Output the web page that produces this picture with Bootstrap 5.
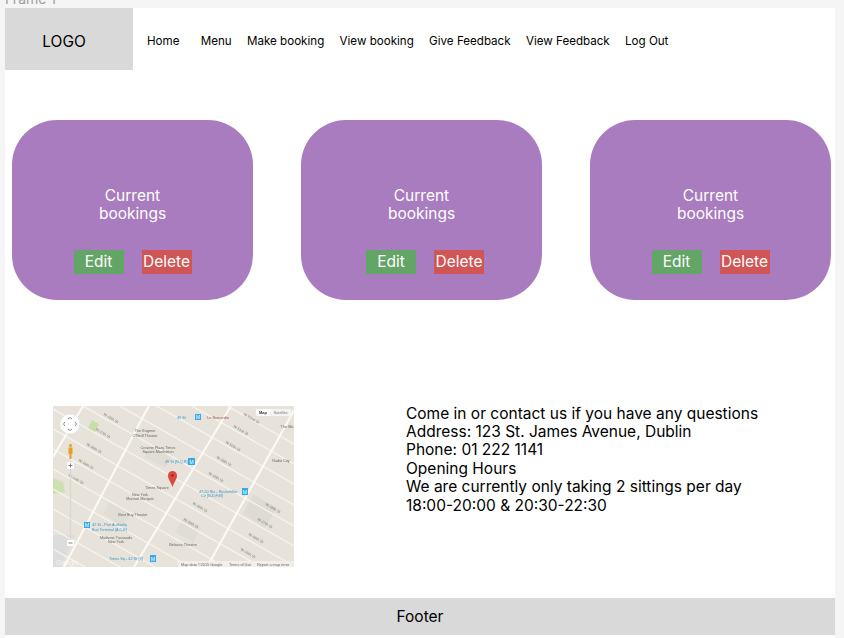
<!DOCTYPE html>
<html lang="en">
<head>
  <meta charset="UTF-8" />
  <title>Restaurant bookings</title>
  <meta name="viewport" content="width=device-width, initial-scale=1" />
  <link href="https://cdn.jsdelivr.net/npm/bootstrap@5.3.0/dist/css/bootstrap.min.css" rel="stylesheet" />
  <style>
    body {
      background-color: #f5f5f5;
      color: #000;
      font-family: Inter, "Liberation Sans", sans-serif;
      font-size: 15.5px;
      height: 638px;
      overflow: hidden;
    }
    .frame-label {
      height: 9px;
      margin-top: -1px;
      padding-left: 5px;
      overflow: hidden;
      font-size: 14px;
      line-height: 0;
      color: #a0a0a0;
    }
    .frame {
      width: 830px;
      height: 630px;
      margin-left: 5px;
      background-color: #fff;
    }
    .logo-box {
      width: 128px;
      height: 62px;
      padding: 5px 10px 0 0;
      background-color: #d9d9d9;
    }
    .top-links {
      padding-left: 14px;
      padding-top: 5px;
      gap: 15.3px;
      font-size: 11.6px;
    }
    .top-links a {
      color: #000;
      text-decoration: none;
    }
    .top-links a:first-child {
      margin-right: 6px;
    }
    .bookings {
      padding: 49.5px 0 0 7px;
      gap: 48px;
    }
    .booking-card {
      width: 241px;
      height: 180px;
      padding-top: 67px;
      border-radius: 45px;
      background-color: #a87cbe;
      color: #fff;
      line-height: 18.4px;
      text-align: center;
    }
    .booking-actions {
      margin-top: 27px;
      gap: 18px;
    }
    .booking-actions.shift-right {
      padding-left: 7px;
    }
    .act-btn {
      width: 50px;
      height: 24px;
      padding: 0;
      border: 0;
      border-radius: 0;
      color: #fff;
      font-size: 15.5px;
      line-height: 24px;
    }
    .act-edit { background-color: #63a566; }
    .act-delete { background-color: #d05555; }
    .info-row {
      padding: 106px 0 0 48px;
    }
    .map-box {
      display: block;
      width: 241px;
      height: 161px;
      filter: blur(0.4px);
    }
    .map-box text {
      font-family: "Liberation Sans", sans-serif;
    }
    .contact-text {
      margin-left: 112px;
      margin-top: -1px;
      line-height: 18.4px;
    }
    .page-foot {
      height: 37px;
      margin-top: 31px;
      background-color: #d9d9d9;
      line-height: 37px;
      text-align: center;
    }
  </style>
</head>
<body>
  <div class="frame-label">Frame 1</div>
  <div class="frame">
    <header class="d-flex">
      <div class="logo-box d-flex align-items-center justify-content-center">LOGO</div>
      <nav class="top-links d-flex align-items-center">
        <a href="#">Home</a>
        <a href="#">Menu</a>
        <a href="#">Make booking</a>
        <a href="#">View booking</a>
        <a href="#">Give Feedback</a>
        <a href="#">View Feedback</a>
        <a href="#">Log Out</a>
      </nav>
    </header>

    <section class="bookings d-flex">
      <div class="booking-card">
        Current<br />bookings
        <div class="booking-actions d-flex justify-content-center">
          <button class="btn act-btn act-edit">Edit</button>
          <button class="btn act-btn act-delete">Delete</button>
        </div>
      </div>
      <div class="booking-card">
        Current<br />bookings
        <div class="booking-actions shift-right d-flex justify-content-center">
          <button class="btn act-btn act-edit">Edit</button>
          <button class="btn act-btn act-delete">Delete</button>
        </div>
      </div>
      <div class="booking-card">
        Current<br />bookings
        <div class="booking-actions d-flex justify-content-center">
          <button class="btn act-btn act-edit">Edit</button>
          <button class="btn act-btn act-delete">Delete</button>
        </div>
      </div>
    </section>

    <section class="info-row d-flex">
      <svg class="map-box" viewBox="0 0 241 161" xmlns="http://www.w3.org/2000/svg">
        <rect width="241" height="161" fill="#e7e3da" />
        <!-- parks and blocks -->
        <path d="M0 72 L10 76 L12 86 L0 88 Z" fill="#cfe0b0" />
        <path d="M39 14 L46 18 L41 27 L35 22 Z" fill="#c5dfa6" />
        <path d="M0 129 L22 129 L8 161 L0 161 Z" fill="#dcdcdc" />
        <path d="M200 88 L224 102 L212 122 L190 108 Z" fill="#dedbd2" />
        <path d="M100 38 L120 49 L112 62 L92 51 Z" fill="#e0ddd5" />
        <path d="M56 96 L78 108 L70 120 L50 108 Z" fill="#e0ddd5" />
        <path d="M130 112 L148 122 L140 136 L122 126 Z" fill="#e0ddd5" />
        <g stroke="#f7f5f0" stroke-width="1.2" fill="none">
          <path d="M0 -99 L241 38" />
          <path d="M0 -79 L241 58" />
          <path d="M0 -59 L241 78" />
          <path d="M0 -38 L241 99" />
          <path d="M0 -17 L241 120" />
          <path d="M0 3 L241 140" />
          <path d="M0 23 L241 160" />
          <path d="M0 43 L208 161" />
          <path d="M0 63 L172 161" />
          <path d="M0 83 L137 161" />
          <path d="M0 103 L102 161" />
          <path d="M0 123 L67 161" />
          <path d="M0 143 L32 161" />
        </g>
        <g stroke="#fbfaf7" stroke-width="2.1" fill="none">
          <path d="M0 51 L30 0" />
          <path d="M11 161 L92 7 L96 0" />
          <path d="M81 161 L178 0" />
          <path d="M154 161 L234 17 L241 4" />
        </g>
        <g fill="#7d7d72" font-size="3.8">
          <text x="50" y="9" transform="rotate(30 50 9)">W 48th St</text>
          <text x="42" y="24" transform="rotate(30 42 24)">W 47th St</text>
          <text x="33" y="39" transform="rotate(30 33 39)">W 46th St</text>
          <text x="25" y="55" transform="rotate(30 25 55)">W 45th St</text>
          <text x="15" y="70" transform="rotate(30 15 70)">W 44th St</text>
          <text x="190" y="9" transform="rotate(30 190 9)">W 52nd St</text>
          <text x="180" y="21" transform="rotate(30 180 21)">W 51st St</text>
          <text x="172" y="37" transform="rotate(30 172 37)">W 50th St</text>
          <text x="163" y="52" transform="rotate(30 163 52)">W 49th St</text>
          <text x="155" y="68" transform="rotate(30 155 68)">W 48th St</text>
          <text x="212" y="99" transform="rotate(30 212 99)">W 48th St</text>
          <text x="204" y="114" transform="rotate(30 204 114)">W 47th St</text>
          <text x="195" y="129" transform="rotate(30 195 129)">W 46th St</text>
          <text x="187" y="144" transform="rotate(30 187 144)">W 45th St</text>
          <text x="139" y="98" transform="rotate(30 139 98)">W 46th St</text>
          <text x="130" y="114" transform="rotate(30 130 114)">W 45th St</text>
        </g>
        <g fill="#666" font-size="3.8" text-anchor="middle">
          <text x="92" y="26">The Eugene</text>
          <text x="92" y="30.5">O'Neill Theater</text>
          <text x="105" y="43">Crowne Plaza Times</text>
          <text x="105" y="47">Square Manhattan</text>
          <text x="104" y="83">Times Square</text>
          <text x="87" y="90">New York</text>
          <text x="87" y="94">Marriott Marquis</text>
          <text x="80" y="110">Best Buy Theater</text>
          <text x="63" y="133">Madame Tussauds</text>
          <text x="63" y="137">New York</text>
          <text x="130" y="140">Belasco Theatre</text>
          <text x="234" y="22">The Mo</text>
          <text x="228" y="56">Radio City</text>
          <text x="165" y="13" fill="#a0524a">Le Bernardin</text>
        </g>
        <g fill="#3a93c9" font-size="3.8">
          <text x="124" y="13">49 St</text>
          <text x="112" y="57">49 St [N,Q,R]</text>
          <text x="146" y="87">47-50 Sts - Rockefeller</text>
          <text x="148" y="91">Ctr [B,D,F,M]</text>
          <text x="39" y="120">42 St - Port Authority</text>
          <text x="39" y="124.5">Bus Terminal [A,C,E]</text>
          <text x="56" y="154">Times Sq - 42 St [S]</text>
        </g>
        <g fill="#33aaf0">
          <rect x="142" y="8" width="6" height="6" />
          <rect x="135" y="52" width="7" height="7" />
          <rect x="189" y="82" width="6" height="7" />
          <rect x="31" y="116" width="6" height="6" />
          <rect x="97" y="149" width="6" height="7" />
        </g>
        <g fill="#fff" font-size="5" text-anchor="middle">
          <text x="145" y="13">M</text>
          <text x="138.500" y="57.500">M</text>
          <text x="192" y="87.500">M</text>
          <text x="34" y="121">M</text>
          <text x="100" y="154.500">M</text>
        </g>
        <!-- map / satellite switch -->
        <rect x="203" y="3" width="14" height="7" fill="#fff" />
        <rect x="217" y="3" width="21" height="7" fill="#f4f4f4" />
        <text x="210" y="8" font-size="4" font-weight="bold" fill="#333" text-anchor="middle">Map</text>
        <text x="227.500" y="8" font-size="4" fill="#777" text-anchor="middle">Satellite</text>
        <!-- pan control -->
        <circle cx="17" cy="18" r="10" fill="#fff" stroke="#ddd" stroke-width=".5" />
        <path d="M15 13 L17 11.500 L19 13 M15 23 L17 24.500 L19 23 M12 16 L10.500 18 L12 20 M22 16 L23.500 18 L22 20" stroke="#666" stroke-width=".8" fill="none" />
        <!-- pegman -->
        <circle cx="17.500" cy="39.500" r="1.500" fill="#e8a020" />
        <path d="M15.500 41.500 H19.500 V48 H18.500 V53 H16.500 V48 H15.500 Z" fill="#e8a020" />
        <!-- zoom bar -->
        <rect x="16.800" y="62" width="1.400" height="72" fill="#d8d8d8" />
        <rect x="14" y="56" width="7" height="7" fill="#fff" />
        <path d="M15.500 59.500 H19.500 M17.500 57.500 V61.500" stroke="#666" stroke-width=".8" />
        <rect x="14" y="134" width="7" height="6" fill="#fff" />
        <path d="M15.500 137 H19.500" stroke="#666" stroke-width=".8" />
        <!-- pin -->
        <path d="M119.500 81 C117.500 75 115 73.500 115 69.500 A4.500 4.500 0 0 1 124 69.500 C124 73.500 121.500 75 119.500 81 Z" fill="#e0483e" />
        <circle cx="119.500" cy="69.500" r="1.300" fill="#8e2a22" />
        <!-- attribution -->
        <rect x="125" y="155" width="116" height="6" fill="#f1efe9" />
        <text x="128" y="159.500" font-size="3.800" fill="#666">Map data ©2015 Google</text>
        <text x="176" y="159.500" font-size="3.800" fill="#666">Terms of Use</text>
        <text x="204" y="159.500" font-size="3.800" fill="#666">Report a map error</text>
        <text x="3" y="159" font-size="7" fill="#fff" opacity=".7">Google</text>
      </svg>
      <div class="contact-text">
        Come in or contact us if you have any questions<br />
        Address: 123 St. James Avenue, Dublin<br />
        Phone: 01 222 1141<br />
        Opening Hours<br />
        We are currently only taking 2 sittings per day<br />
        18:00-20:00 &amp; 20:30-22:30
      </div>
    </section>

    <footer class="page-foot">Footer</footer>
  </div>
  <script src="https://cdn.jsdelivr.net/npm/bootstrap@5.3.0/dist/js/bootstrap.bundle.min.js"></script>
</body>
</html>
